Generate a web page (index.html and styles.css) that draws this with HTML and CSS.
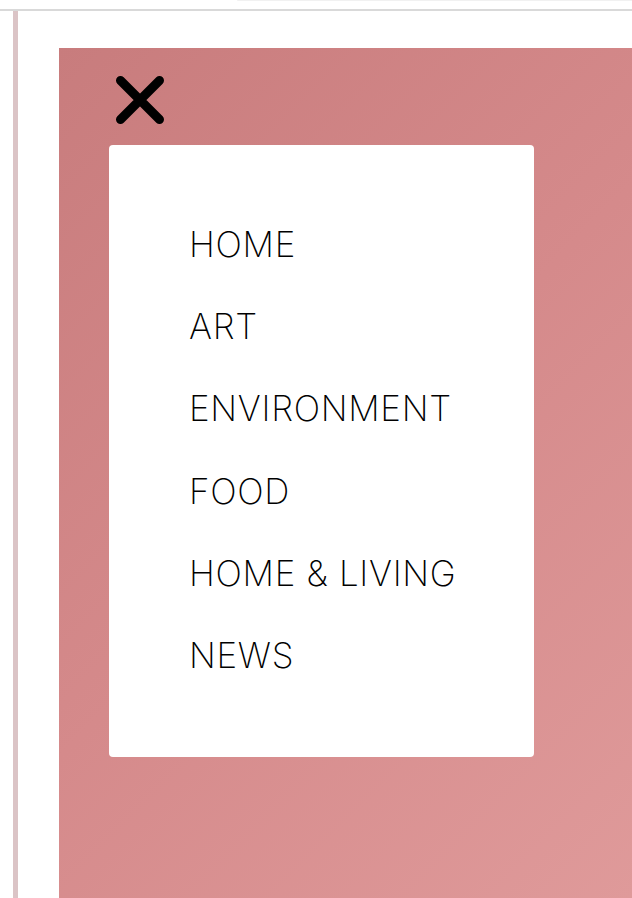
FILE: index.html
```html
<!DOCTYPE html>
<html>
<head>
<meta charset="utf-8">
<link rel="stylesheet" href="styles.css">
</head>
<body>
<div class="topbar"><div class="topbar-field"></div></div>
<div class="page">
  <div class="sidebar"></div>
  <div class="main">
    <div class="panel">
      <button class="close" aria-label="Close">
        <svg width="50" height="50" viewBox="0 0 50 50"><path d="M5.5 5.5 L44.5 44.5 M44.5 5.5 L5.5 44.5" stroke="#000" stroke-width="9" stroke-linecap="round" fill="none"/></svg>
      </button>
      <nav class="card">
        <ul class="menu">
          <li><a href="#">HOME</a></li>
          <li><a href="#">ART</a></li>
          <li><a href="#">ENVIRONMENT</a></li>
          <li><a href="#">FOOD</a></li>
          <li><a href="#">HOME &amp; LIVING</a></li>
          <li><a href="#">NEWS</a></li>
        </ul>
      </nav>
    </div>
  </div>
</div>
</body>
</html>
```

FILE: styles.css
```css
html, body {
  margin: 0;
  padding: 0;
  height: 100%;
  background: #fff;
  overflow: hidden;
}
.topbar {
  height: 9px;
  border-bottom: 2px solid #d9d9d9;
  display: flex;
  justify-content: flex-end;
}
.topbar-field {
  width: 395px;
  height: 1px;
  background: #f1f1f1;
  border-bottom-left-radius: 4px;
}
.page {
  display: flex;
  padding-left: 13px;
  height: calc(100% - 11px);
}
.sidebar {
  width: 5px;
  background: #dbc4c6;
}
.main {
  flex: 1;
  padding: 37px 0 0 41px;
}
.panel {
  height: 100%;
  background: linear-gradient(135deg, #c87c7d 0%, #d58a8b 50%, #df9a9a 100%);
  padding: 27px 0 0 50px;
  box-sizing: border-box;
}
.close {
  display: block;
  border: 0;
  padding: 0;
  margin: 0 0 20px 6px;
  background: none;
  width: 50px;
  height: 50px;
}
.close svg { display: block; }
.card {
  width: 425px;
  height: 612px;
  background: #fff;
  border-radius: 4px;
  box-sizing: border-box;
  padding: 58px 0 0 80px;
}
.menu {
  list-style: none;
  margin: 0;
  padding: 0;
}
.menu li {
  height: 82.2px;
  line-height: 82px;
}
.menu a {
  font-family: "Inter", "Lato", sans-serif;
  font-weight: 200;
  font-size: 35px;
  color: #000;
  text-decoration: none;
  letter-spacing: 0.7px;
}
```
